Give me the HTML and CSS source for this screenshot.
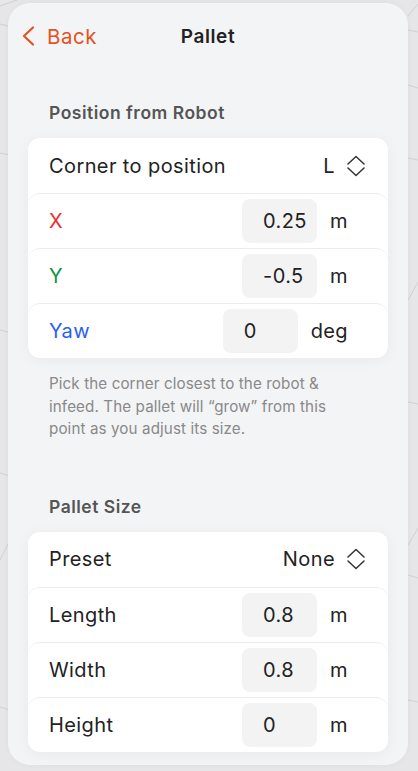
FILE: index.html
```html
<!DOCTYPE html>
<html lang="en">
<head>
<meta charset="utf-8">
<title>Pallet</title>
<link rel="stylesheet" href="styles.css">
</head>
<body>
<div class="panel">
  <header class="header">
    <button class="back">
      <svg class="back-icon" width="14" height="20" viewBox="0 0 14 20"><path d="M12 1.5 L3 10 L12 18.5" fill="none" stroke="#e4531e" stroke-width="2.2" stroke-linecap="round" stroke-linejoin="round"/></svg>
      <span>Back</span>
    </button>
    <h1 class="title">Pallet</h1>
    <span class="spacer"></span>
  </header>

  <section class="section first">
    <h2 class="section-title">Position from Robot</h2>
    <div class="card">
      <div class="row select-row">
        <span class="label">Corner to position</span>
        <span class="select">L
          <svg class="updown" width="18" height="22" viewBox="0 0 18 22"><path d="M1 9 L9 1.5 L17 9 M1 13 L9 20.5 L17 13" fill="none" stroke="#333" stroke-width="1.5" stroke-linecap="round" stroke-linejoin="round"/></svg>
        </span>
      </div>
      <div class="row input-row">
        <span class="label red">X</span>
        <span class="field">0.25</span>
        <span class="unit">m</span>
      </div>
      <div class="row input-row">
        <span class="label green">Y</span>
        <span class="field">-0.5</span>
        <span class="unit">m</span>
      </div>
      <div class="row input-row">
        <span class="label blue">Yaw</span>
        <span class="field">0</span>
        <span class="unit">deg</span>
      </div>
    </div>
    <p class="help">Pick the corner closest to the robot &amp; infeed. The pallet will “grow” from this point as you adjust its size.</p>
  </section>

  <section class="section second">
    <h2 class="section-title">Pallet Size</h2>
    <div class="card">
      <div class="row select-row">
        <span class="label">Preset</span>
        <span class="select">None
          <svg class="updown" width="18" height="22" viewBox="0 0 18 22"><path d="M1 9 L9 1.5 L17 9 M1 13 L9 20.5 L17 13" fill="none" stroke="#333" stroke-width="1.5" stroke-linecap="round" stroke-linejoin="round"/></svg>
        </span>
      </div>
      <div class="row input-row">
        <span class="label">Length</span>
        <span class="field">0.8</span>
        <span class="unit">m</span>
      </div>
      <div class="row input-row">
        <span class="label">Width</span>
        <span class="field">0.8</span>
        <span class="unit">m</span>
      </div>
      <div class="row input-row">
        <span class="label">Height</span>
        <span class="field">0</span>
        <span class="unit">m</span>
      </div>
    </div>
  </section>
</div>
</body>
</html>
```
FILE: styles.css
```css
* { box-sizing: border-box; }
html, body { margin: 0; padding: 0; }
body {
  width: 418px;
  height: 771px;
  overflow: hidden;
  font-family: Inter, "Noto Sans", "Liberation Sans", sans-serif;
  color: #222;
  background-color: #e6e6e8;
  background-image: url("data:image/svg+xml;utf8,<svg xmlns='http://www.w3.org/2000/svg' width='418' height='771'><g stroke='%23cfcfd2' stroke-width='1' fill='none'><path d='M0 6 L28 -4'/><path d='M0 24 L8 26'/><path d='M0 153 L10 155'/><path d='M0 330 L8 332'/><path d='M0 473 L10 476'/><path d='M0 560 L10 540'/><path d='M0 707 L10 710'/><path d='M408 16 L418 4'/><path d='M408 30 L418 32'/><path d='M408 85 L418 88'/><path d='M408 158 L418 160'/><path d='M408 300 L418 282'/><path d='M408 402 L418 404'/><path d='M408 545 L418 528'/><path d='M408 575 L418 578'/><path d='M408 700 L418 702'/></g></svg>");
}
.panel {
  width: 400px;
  height: 762px;
  margin: 3px 0 0 8px;
  background: #f3f4f6;
  border-radius: 22px;
  padding: 0 20px;
  box-shadow: 0 0 6px rgba(0,0,0,0.04);
}
.header {
  height: 66px;
  display: flex;
  align-items: center;
  justify-content: space-between;
}
.back {
  display: flex;
  align-items: center;
  gap: 12px;
  background: none;
  border: 0;
  padding: 0;
  margin-left: -7px;
  font: inherit;
  font-size: 20.5px;
  letter-spacing: 0.5px;
  color: #e4531e;
  width: 101px;
}
.back-icon { display: block; }
.title {
  margin: 0;
  font-size: 19px;
  font-weight: 600;
  letter-spacing: 0.6px;
  color: #222;
}
.spacer { width: 94px; }
.section.first { padding-top: 33px; }
.section.second { padding-top: 55px; }
.section-title {
  margin: 0 0 14px 21px;
  font-size: 17.5px;
  line-height: 22px;
  font-weight: 600;
  letter-spacing: 0.5px;
  color: #555;
}
.card {
  background: #fff;
  border-radius: 12px;
  box-shadow: 0 2px 14px rgba(0,0,0,0.05);
}
.row {
  height: 55px;
  display: flex;
  align-items: center;
  padding-left: 21px;
  font-size: 20px;
  letter-spacing: 0.4px;
}
.row + .row {
  border-top: 1px solid #ececec;
  border-radius: 12px;
}
.label { flex: 1; }
.red { color: #ee2d27; }
.green { color: #119143; }
.blue { color: #2a5ff2; }
.select-row { padding-right: 23px; }
.select {
  display: flex;
  align-items: center;
  gap: 12px;
}
.updown { display: block; }
.input-row { padding-right: 40px; }
.field {
  width: 75px;
  height: 44px;
  background: #f3f3f3;
  border-radius: 8px;
  padding-left: 21px;
  display: flex;
  align-items: center;
}
.unit { margin-left: 13px; }
.help {
  margin: 15px 45px 0 21px;
  font-size: 15.2px;
  line-height: 22.5px;
  letter-spacing: 0.1px;
  color: #898989;
}
```
